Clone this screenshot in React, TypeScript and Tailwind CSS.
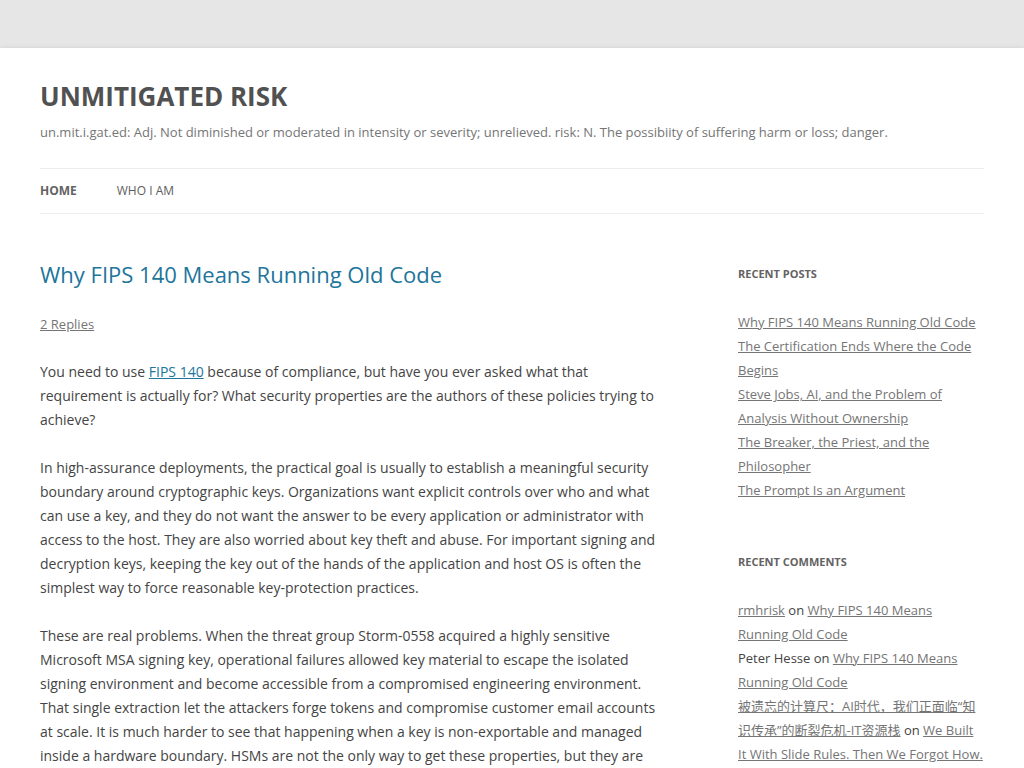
import React from 'react';

const recentPosts = [
  'Why FIPS 140 Means Running Old Code',
  'The Certification Ends Where the Code Begins',
  'Steve Jobs, AI, and the Problem of Analysis Without Ownership',
  'The Breaker, the Priest, and the Philosopher',
  'The Prompt Is an Argument',
];

const App: React.FC = () => {
  return (
    <div className="min-h-screen bg-[#e6e6e6] pt-12 font-['Open_Sans','Noto_Sans_CJK_SC',sans-serif]">
      <div className="bg-white px-10 pt-6 pb-12 shadow-[0_2px_6px_rgba(100,100,100,0.3)]">
        {/* Header */}
        <header>
          <h1 className="text-[26px] leading-[48px] font-bold text-[#515151] uppercase">Unmitigated Risk</h1>
          <p className="text-[13px] leading-6 text-[#757575]">
            un.mit.i.gat.ed: Adj. Not diminished or moderated in intensity or severity; unrelieved. risk: N. The possibiity of suffering harm or loss; danger.
          </p>
          <nav className="mt-6 border-t border-b border-[#ededed]">
            <ul className="flex text-[12px] leading-[44px] uppercase">
              <li className="mr-10 font-bold text-[#636363]">Home</li>
              <li className="text-[#5e5e5e]">Who I Am</li>
            </ul>
          </nav>
        </header>

        <div className="mt-[46px] flex justify-between">
          {/* Main content */}
          <main className="w-[620px] text-[#444]">
            <h2 className="text-[22px] leading-[28px] text-[#21759b]">Why FIPS 140 Means Running Old Code</h2>
            <div className="mt-6 text-[13px] leading-6 text-[#757575] underline">2 Replies</div>
            <div className="mt-6 space-y-6 text-[14px] leading-6">
              <p>
                You need to use <span className="text-[#21759b] underline">FIPS 140</span> because of compliance, but have you ever asked what that requirement is actually for? What security properties are the authors of these policies trying to achieve?
              </p>
              <p>
                In high-assurance deployments, the practical goal is usually to establish a meaningful security boundary around cryptographic keys. Organizations want explicit controls over who and what can use a key, and they do not want the answer to be every application or administrator with access to the host. They are also worried about key theft and abuse. For important signing and decryption keys, keeping the key out of the hands of the application and host OS is often the simplest way to force reasonable key-protection practices.
              </p>
              <p>
                These are real problems. When the threat group Storm-0558 acquired a highly sensitive Microsoft MSA signing key, operational failures allowed key material to escape the isolated signing environment and become accessible from a compromised engineering environment. That single extraction let the attackers forge tokens and compromise customer email accounts at scale. It is much harder to see that happening when a key is non-exportable and managed inside a hardware boundary. HSMs are not the only way to get these properties, but they are the most common way organizations get them today.
              </p>
            </div>
          </main>

          {/* Sidebar */}
          <aside className="mt-[2px] w-[246px]">
            <section>
              <h3 className="text-[11px] leading-6 font-bold uppercase text-[#636363]">Recent Posts</h3>
              <ul className="mt-6 text-[13px] leading-6 text-[#757575]">
                {recentPosts.map((title) => (
                  <li key={title}>
                    <span className="underline">{title}</span>
                  </li>
                ))}
              </ul>
            </section>
            <section className="mt-12">
              <h3 className="text-[11px] leading-6 font-bold uppercase text-[#636363]">Recent Comments</h3>
              <ul className="mt-6 text-[13px] leading-6 text-[#444]">
                <li>
                  <span className="text-[#757575] underline">rmhrisk</span> on{' '}
                  <span className="text-[#757575] underline">Why FIPS 140 Means Running Old Code</span>
                </li>
                <li>
                  Peter Hesse on <span className="text-[#757575] underline">Why FIPS 140 Means Running Old Code</span>
                </li>
                <li>
                  <span className="text-[#757575] underline">被遗忘的计算尺：AI时代，我们正面临“知识传承”的断裂危机-IT资源栈</span> on{' '}
                  <span className="text-[#757575] underline">We Built It With Slide Rules. Then We Forgot How.</span>
                </li>
              </ul>
            </section>
          </aside>
        </div>
      </div>
    </div>
  );
};

export default App;
